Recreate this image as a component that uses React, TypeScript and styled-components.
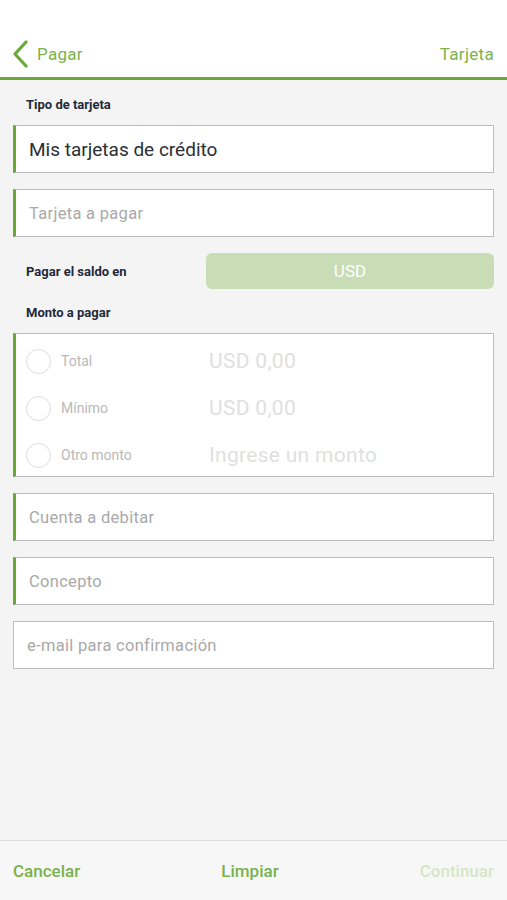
import React from "react";
import styled, { createGlobalStyle } from "styled-components";

const GlobalStyle = createGlobalStyle`
  html, body {
    margin: 0;
    padding: 0;
    background: #f4f4f4;
    font-family: Roboto, "Noto Sans", sans-serif;
  }
`;

const Page = styled.div`
  display: flex;
  flex-direction: column;
  height: 900px;
  background: #f4f4f4;
`;

const Header = styled.header`
  height: 80px;
  background: #fff;
  border-bottom: 3px solid #6aa935;
  display: flex;
  align-items: flex-end;
  justify-content: space-between;
  padding: 0 13px 9px 12px;
  box-sizing: border-box;
`;

const Back = styled.div`
  display: flex;
  align-items: center;
  gap: 8px;
  color: #7ab24d;
  font-size: 17px;
  letter-spacing: 0.3px;
`;

const Title = styled.div`
  color: #7ab24d;
  font-size: 17px;
  letter-spacing: 0.3px;
  padding-bottom: 4px;
`;

const Form = styled.main`
  flex: 1;
  padding: 17px 13px 0;
  display: flex;
  flex-direction: column;
`;

const Label = styled.div<{ $mt?: number; $mb?: number }>`
  font-size: 13px;
  font-weight: 700;
  color: #1f2a3a;
  padding-left: 13px;
  margin-top: ${(p) => p.$mt ?? 0}px;
  margin-bottom: ${(p) => p.$mb ?? 13}px;
`;

const Field = styled.div<{ $required?: boolean; $mt?: number; $filled?: boolean }>`
  height: 48px;
  box-sizing: border-box;
  background: #fff;
  border: 1px solid #bdbdbd;
  border-left: ${(p) => (p.$required ? "3px solid #6aa935" : "1px solid #bdbdbd")};
  display: flex;
  align-items: center;
  padding-left: 13px;
  margin-top: ${(p) => p.$mt ?? 0}px;
  font-size: ${(p) => (p.$filled ? 19 : 16.5)}px;
  letter-spacing: ${(p) => (p.$filled ? 0 : 0.3)}px;
  color: ${(p) => (p.$filled ? "#2a2f36" : "#a9a9a9")};
`;

const BalanceRow = styled.div`
  display: flex;
  align-items: center;
  margin-top: 16px;
`;

const RowLabel = styled.div`
  width: 193px;
  font-size: 13px;
  font-weight: 700;
  color: #1f2a3a;
  padding-left: 13px;
  box-sizing: border-box;
`;

const CurrencyButton = styled.div`
  flex: 1;
  height: 36px;
  border-radius: 6px;
  background: #c8ddb6;
  color: #fff;
  font-size: 17px;
  display: flex;
  align-items: center;
  justify-content: center;
`;

const AmountBox = styled.div`
  background: #fff;
  border: 1px solid #bdbdbd;
  border-left: 3px solid #6aa935;
  height: 144px;
  box-sizing: border-box;
  display: flex;
  flex-direction: column;
  justify-content: center;
  gap: 22px;
  padding: 6px 0 0 10px;
`;

const Option = styled.div`
  display: flex;
  align-items: center;
  height: 25px;
`;

const Radio = styled.span`
  width: 23px;
  height: 23px;
  border: 1px solid #dedede;
  border-radius: 50%;
  flex-shrink: 0;
`;

const OptionLabel = styled.span`
  width: 148px;
  margin-left: 10px;
  font-size: 14px;
  color: #b9b9b9;
`;

const OptionValue = styled.span`
  font-size: 21px;
  letter-spacing: 0.3px;
  color: #e0e0e0;
`;

const Footer = styled.footer`
  height: 59px;
  border-top: 1px solid #dcdcdc;
  background: #f7f7f7;
  display: flex;
  align-items: center;
  justify-content: space-between;
  padding: 0 13px;
`;

const FooterAction = styled.span<{ $disabled?: boolean }>`
  font-size: 17px;
  font-weight: 500;
  color: ${(p) => (p.$disabled ? "#d6e6c6" : "#7ab24d")};
`;

const options = [
  { label: "Total", value: "USD 0,00" },
  { label: "Mínimo", value: "USD 0,00" },
  { label: "Otro monto", value: "Ingrese un monto" },
];

export default function App() {
  return (
    <Page>
      <GlobalStyle />
      <Header>
        <Back>
          <svg width="17" height="28" viewBox="0 0 17 28">
            <path d="M14 2 L3 14 L14 26" fill="none" stroke="#6aa935" strokeWidth="3.2" strokeLinecap="round" strokeLinejoin="round" />
          </svg>
          Pagar
        </Back>
        <Title>Tarjeta</Title>
      </Header>
      <Form>
        <Label>Tipo de tarjeta</Label>
        <Field $required $filled>Mis tarjetas de crédito</Field>
        <Field $required $mt={16}>Tarjeta a pagar</Field>
        <BalanceRow>
          <RowLabel>Pagar el saldo en</RowLabel>
          <CurrencyButton>USD</CurrencyButton>
        </BalanceRow>
        <Label $mt={16} $mb={13}>Monto a pagar</Label>
        <AmountBox>
          {options.map((o) => (
            <Option key={o.label}>
              <Radio />
              <OptionLabel>{o.label}</OptionLabel>
              <OptionValue>{o.value}</OptionValue>
            </Option>
          ))}
        </AmountBox>
        <Field $required $mt={16}>Cuenta a debitar</Field>
        <Field $required $mt={16}>Concepto</Field>
        <Field $mt={16}>e-mail para confirmación</Field>
      </Form>
      <Footer>
        <FooterAction>Cancelar</FooterAction>
        <FooterAction>Limpiar</FooterAction>
        <FooterAction $disabled>Continuar</FooterAction>
      </Footer>
    </Page>
  );
}
